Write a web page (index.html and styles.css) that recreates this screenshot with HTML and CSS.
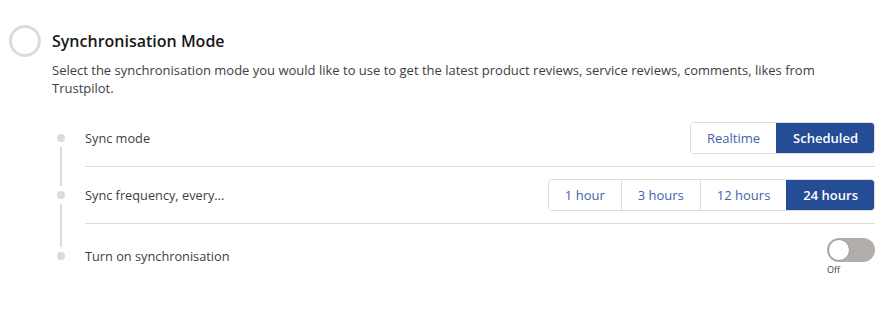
FILE: index.html
```html
<!DOCTYPE html>
<html lang="en">

<head>
    <meta charset="UTF-8">
    <title>Synchronisation Mode</title>
    <link rel="stylesheet" href="styles.css">
</head>

<body>
    <div class="step">
        <div class="step-marker"></div>
        <div class="step-body">
            <h2 class="step-title">Synchronisation Mode</h2>
            <p class="step-desc">Select the synchronisation mode you would like to use to get the latest product reviews, service reviews, comments, likes from Trustpilot.</p>
        </div>
    </div>
    <div class="settings">
        <div class="setting first">
            <div class="dot"></div>
            <span class="setting-label">Sync mode</span>
            <div class="btn-group">
                <button class="btn">Realtime</button>
                <button class="btn active">Scheduled</button>
            </div>
        </div>
        <div class="setting">
            <div class="dot"></div>
            <span class="setting-label">Sync frequency, every...</span>
            <div class="btn-group">
                <button class="btn">1 hour</button>
                <button class="btn">3 hours</button>
                <button class="btn">12 hours</button>
                <button class="btn active">24 hours</button>
            </div>
        </div>
        <div class="setting last">
            <div class="dot"></div>
            <span class="setting-label">Turn on synchronisation</span>
            <div class="toggle-wrap">
                <div class="toggle"><div class="knob"></div></div>
                <span class="toggle-text">Off</span>
            </div>
        </div>
    </div>
</body>

</html>
```

FILE: styles.css
```css
body {
    margin: 0;
    padding: 25px 12px 0 9px;
    font-family: "Open Sans", "Liberation Sans", sans-serif;
    color: #3e3e3c;
    background: #fff;
}

.step {
    display: flex;
    gap: 11px;
}

.step-marker {
    width: 26px;
    height: 26px;
    border: 3px solid #dddbda;
    border-radius: 50%;
    flex: none;
}

.step-title {
    margin: 5px 0 0 0;
    font-size: 16px;
    font-weight: 600;
    color: #181818;
    line-height: 22px;
}

.step-desc {
    margin: 9px 0 0 0;
    font-size: 13px;
    line-height: 18px;
    color: #3e3e3c;
}

.settings {
    margin-top: 13px;
    padding-left: 48px;
}

.setting {
    display: flex;
    align-items: center;
    gap: 20px;
    padding: 12px 0 13px 0;
    position: relative;
}

/* connector line between the dots */
.setting::before {
    content: "";
    position: absolute;
    left: 3px;
    top: 0;
    bottom: 0;
    width: 2px;
    background: #dddbda;
}

.setting.first::before {
    top: 50%;
}

.setting.last::before {
    bottom: 50%;
}

/* row divider, starts under the label */
.setting::after {
    content: "";
    position: absolute;
    left: 28px;
    right: 0;
    bottom: 0;
    height: 1px;
    background: #dddbda;
}

.setting.last::after {
    display: none;
}

.dot {
    width: 8px;
    height: 8px;
    border-radius: 50%;
    background: #dddbda;
    flex: none;
    position: relative;
    box-shadow: 0 0 0 5px #fff;
}

.setting-label {
    flex: 1;
    font-size: 12.75px;
    color: #3e3e3c;
}

.btn-group {
    display: flex;
    border: 1px solid #dddbda;
    border-radius: 4px;
    overflow: hidden;
}

.btn {
    font-family: "Open Sans", "Liberation Sans", sans-serif;
    font-size: 13px;
    color: #4064ad;
    background: #fff;
    border: none;
    border-left: 1px solid #dddbda;
    height: 30px;
    padding: 0 16px;
    cursor: pointer;
}

.btn:first-child {
    border-left: none;
}

.btn.active {
    background: #254d95;
    color: #fff;
    font-weight: 600;
    border-left-color: #254d95;
}

.toggle-wrap {
    display: flex;
    flex-direction: column;
    align-items: flex-start;
    margin-top: 2px;
}

.toggle {
    width: 48px;
    height: 24px;
    border-radius: 12px;
    background: #b0adab;
    position: relative;
}

.knob {
    position: absolute;
    left: 1px;
    top: 1px;
    width: 20px;
    height: 20px;
    border-radius: 50%;
    background: #fff;
    border: 1px solid #9f9c99;
}

.toggle-text {
    font-size: 9px;
    line-height: 12px;
    color: #3e3e3c;
    margin-top: 2px;
}
```
